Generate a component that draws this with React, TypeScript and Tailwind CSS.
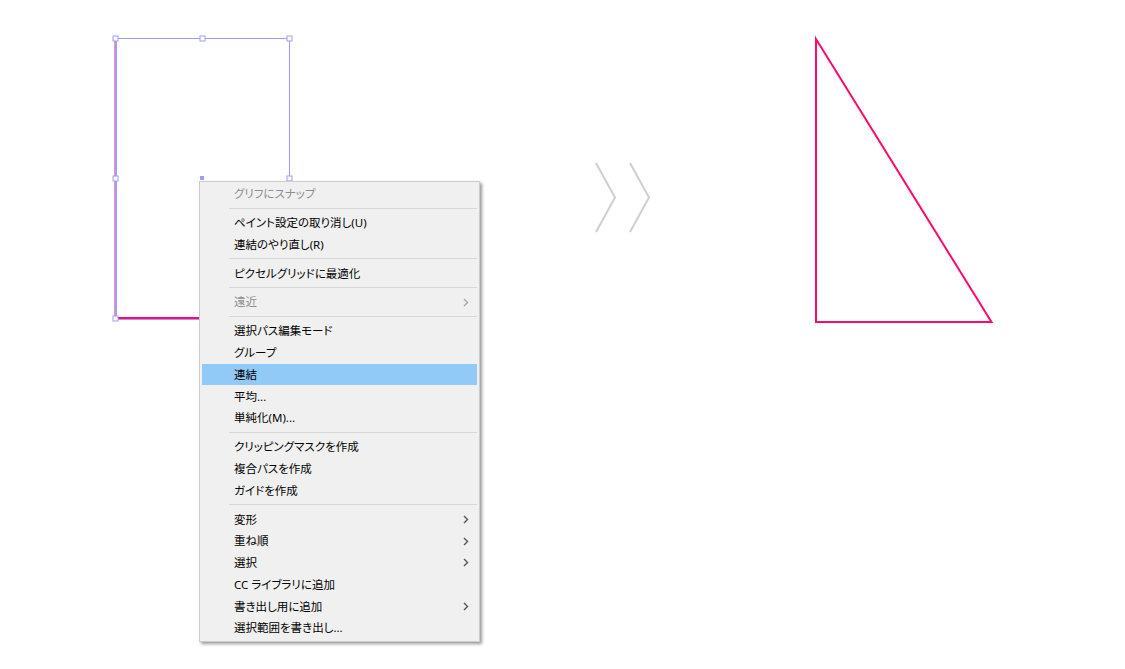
type Item =
  | { kind: "sep" }
  | { kind: "item"; label: string; disabled?: boolean; sub?: boolean; active?: boolean };

const items: Item[] = [
  { kind: "item", label: "グリフにスナップ", disabled: true },
  { kind: "sep" },
  { kind: "item", label: "ペイント設定の取り消し(U)" },
  { kind: "item", label: "連結のやり直し(R)" },
  { kind: "sep" },
  { kind: "item", label: "ピクセルグリッドに最適化" },
  { kind: "sep" },
  { kind: "item", label: "遠近", disabled: true, sub: true },
  { kind: "sep" },
  { kind: "item", label: "選択パス編集モード" },
  { kind: "item", label: "グループ" },
  { kind: "item", label: "連結", active: true },
  { kind: "item", label: "平均..." },
  { kind: "item", label: "単純化(M)..." },
  { kind: "sep" },
  { kind: "item", label: "クリッピングマスクを作成" },
  { kind: "item", label: "複合パスを作成" },
  { kind: "item", label: "ガイドを作成" },
  { kind: "sep" },
  { kind: "item", label: "変形", sub: true },
  { kind: "item", label: "重ね順", sub: true },
  { kind: "item", label: "選択", sub: true },
  { kind: "item", label: "CC ライブラリに追加" },
  { kind: "item", label: "書き出し用に追加", sub: true },
  { kind: "item", label: "選択範囲を書き出し..." },
];

function Chevron({ muted }: { muted?: boolean }) {
  return (
    <svg width="6" height="9" viewBox="0 0 6 9" className="shrink-0">
      <path d="M1 1 L4.5 4.5 L1 8" fill="none" stroke={muted ? "#a8a8a8" : "#555555"} strokeWidth="1.4" />
    </svg>
  );
}

function Artwork() {
  const handle = (x: number, y: number) => (
    <rect key={`${x}-${y}`} x={x - 2.5} y={y - 2.5} width="5" height="5" fill="#ffffff" stroke="#9f9cff" strokeWidth="1" />
  );
  return (
    <svg width="1125" height="669" className="absolute left-0 top-0">
      {/* open path: left + bottom edge, mostly under the selection box */}
      <path d="M114.5 38.5 L114.5 317.5" fill="none" stroke="#ff8fb8" strokeWidth="1" />
      <path d="M114 318 L289 318" fill="none" stroke="#ff0a6c" strokeWidth="2" />
      {/* bounding box */}
      <path d="M115.5 38.5 L289.5 38.5 L289.5 318.5" fill="none" stroke="#9f9cff" strokeWidth="1" />
      <path d="M116 38 L116 319" fill="none" stroke="#9f9cff" strokeWidth="2" />
      <path d="M115 319.5 L289 319.5" fill="none" stroke="#9f9cff" strokeWidth="1" />
      {handle(115.5, 38.5)}
      {handle(202.5, 38.5)}
      {handle(289.5, 38.5)}
      {handle(115.5, 178.5)}
      {handle(289.5, 178.5)}
      {handle(115.5, 318.5)}
      <rect x="200" y="176" width="4" height="4" fill="#9f9cff" />

      {/* arrows */}
      <path d="M596 163 L615 197.5 L596 232" fill="none" stroke="#cfcfcf" strokeWidth="2" />
      <path d="M630 163 L649 197.5 L630 232" fill="none" stroke="#cfcfcf" strokeWidth="2" />

      {/* result triangle */}
      <path d="M816 39 L816 322 L991.5 322 Z" fill="none" stroke="#ff0a6c" strokeWidth="2" />
    </svg>
  );
}

export default function App() {
  return (
    <div className="relative w-[1125px] h-[669px] bg-white overflow-hidden">
      <Artwork />

      <div className="absolute left-[199px] top-[181px] w-[281px] bg-[#f0f0f0] border border-[#cccccc] pt-[1px] pb-[2px] shadow-[2px_2px_3px_rgba(0,0,0,0.4)] font-['Noto_Sans','Noto_Sans_CJK_JP',sans-serif] text-[11.5px] [font-feature-settings:'palt'] leading-none">
        {items.map((it, i) =>
          it.kind === "sep" ? (
            <div key={i} className="h-[7px] flex items-center ml-[29px] mr-[2px]">
              <div className="h-px w-full bg-[#d7d7d7]" />
            </div>
          ) : (
            <div
              key={i}
              className={`h-[21.8px] mx-[2px] flex items-center pl-[32px] pr-[8px] ${
                it.active ? "bg-[#91c9f7]" : ""
              } ${it.disabled ? "text-[#8d8d8d]" : "text-black"}`}
            >
              <span className="flex-1 whitespace-nowrap">{it.label}</span>
              {it.sub && <Chevron muted={it.disabled} />}
            </div>
          )
        )}
      </div>
    </div>
  );
}
